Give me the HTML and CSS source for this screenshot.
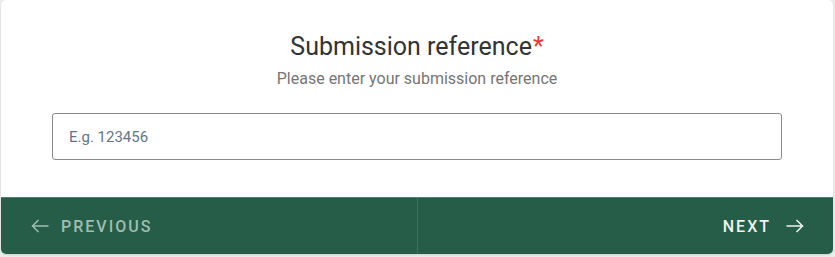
FILE: index.html
```html
<!DOCTYPE html>
<html lang="en">
<head>
<meta charset="utf-8">
<title>Submission reference</title>
<link rel="stylesheet" href="styles.css">
</head>
<body>
<div class="card">
  <div class="body">
    <h1 class="title">Submission reference<span class="req">*</span></h1>
    <p class="subtitle">Please enter your submission reference</p>
    <input class="field" type="text" placeholder="E.g. 123456">
  </div>
  <div class="footer">
    <button class="nav prev" type="button">
      <svg class="arrow" width="18" height="14" viewBox="0 0 18 14" aria-hidden="true"><path d="M17.5 7H1.5M7.5 1L1.5 7l6 6" fill="none" stroke="currentColor" stroke-width="1.5"/></svg>
      <span>PREVIOUS</span>
    </button>
    <button class="nav next" type="button">
      <span>NEXT</span>
      <svg class="arrow" width="18" height="14" viewBox="0 0 18 14" aria-hidden="true"><path d="M0.5 7H16.5M10.5 1l6 6-6 6" fill="none" stroke="currentColor" stroke-width="1.5"/></svg>
    </button>
  </div>
</div>
</body>
</html>
```
FILE: styles.css
```css
* { box-sizing: border-box; }
html, body { margin: 0; padding: 0; }
body {
  background: #ececec;
  font-family: Roboto, "Liberation Sans", Arial, sans-serif;
  width: 835px;
  height: 257px;
  overflow: hidden;
}
.card {
  margin: 0 2px 0 1px;
  height: 254px;
  background: #fff;
  border-radius: 5px;
  box-shadow: 0 1px 2px rgba(0,0,0,0.12);
  overflow: hidden;
  display: flex;
  flex-direction: column;
}
.body {
  flex: 1;
  padding: 32px 51px 0 51px;
  display: flex;
  flex-direction: column;
  align-items: center;
}
.title {
  margin: 0;
  font-size: 25px;
  font-weight: 400;
  line-height: 29px;
  color: #333;
}
.req { color: #e53935; margin-left: 1px; }
.subtitle {
  margin: 8px 0 0;
  font-size: 16px;
  line-height: 19px;
  color: #757575;
}
.field {
  margin-top: 25px;
  width: 730px;
  height: 47px;
  border: 1px solid #8a8a8a;
  border-radius: 3px;
  padding: 0 16px;
  font-family: inherit;
  font-size: 15px;
  color: #333;
  outline: none;
}
.field::placeholder { color: #66748a; opacity: 1; }
.footer {
  height: 57px;
  background: #255d48;
  border-top: 1px solid #4d7f6c;
  display: flex;
}
.nav {
  flex: 1;
  display: flex;
  align-items: center;
  gap: 12px;
  background: transparent;
  border: 0;
  font-family: inherit;
  font-size: 16px;
  font-weight: 500;
  letter-spacing: 2px;
  cursor: pointer;
  padding-bottom: 1px;
}
.prev {
  padding-left: 30px;
  color: #9fbdb0;
  border-right: 1px solid #3b705c;
}
.next {
  justify-content: flex-end;
  padding-right: 29px;
  color: #eef3ef;
}
.next span { margin-right: 3px; }
.arrow { display: block; flex: none; }
```
